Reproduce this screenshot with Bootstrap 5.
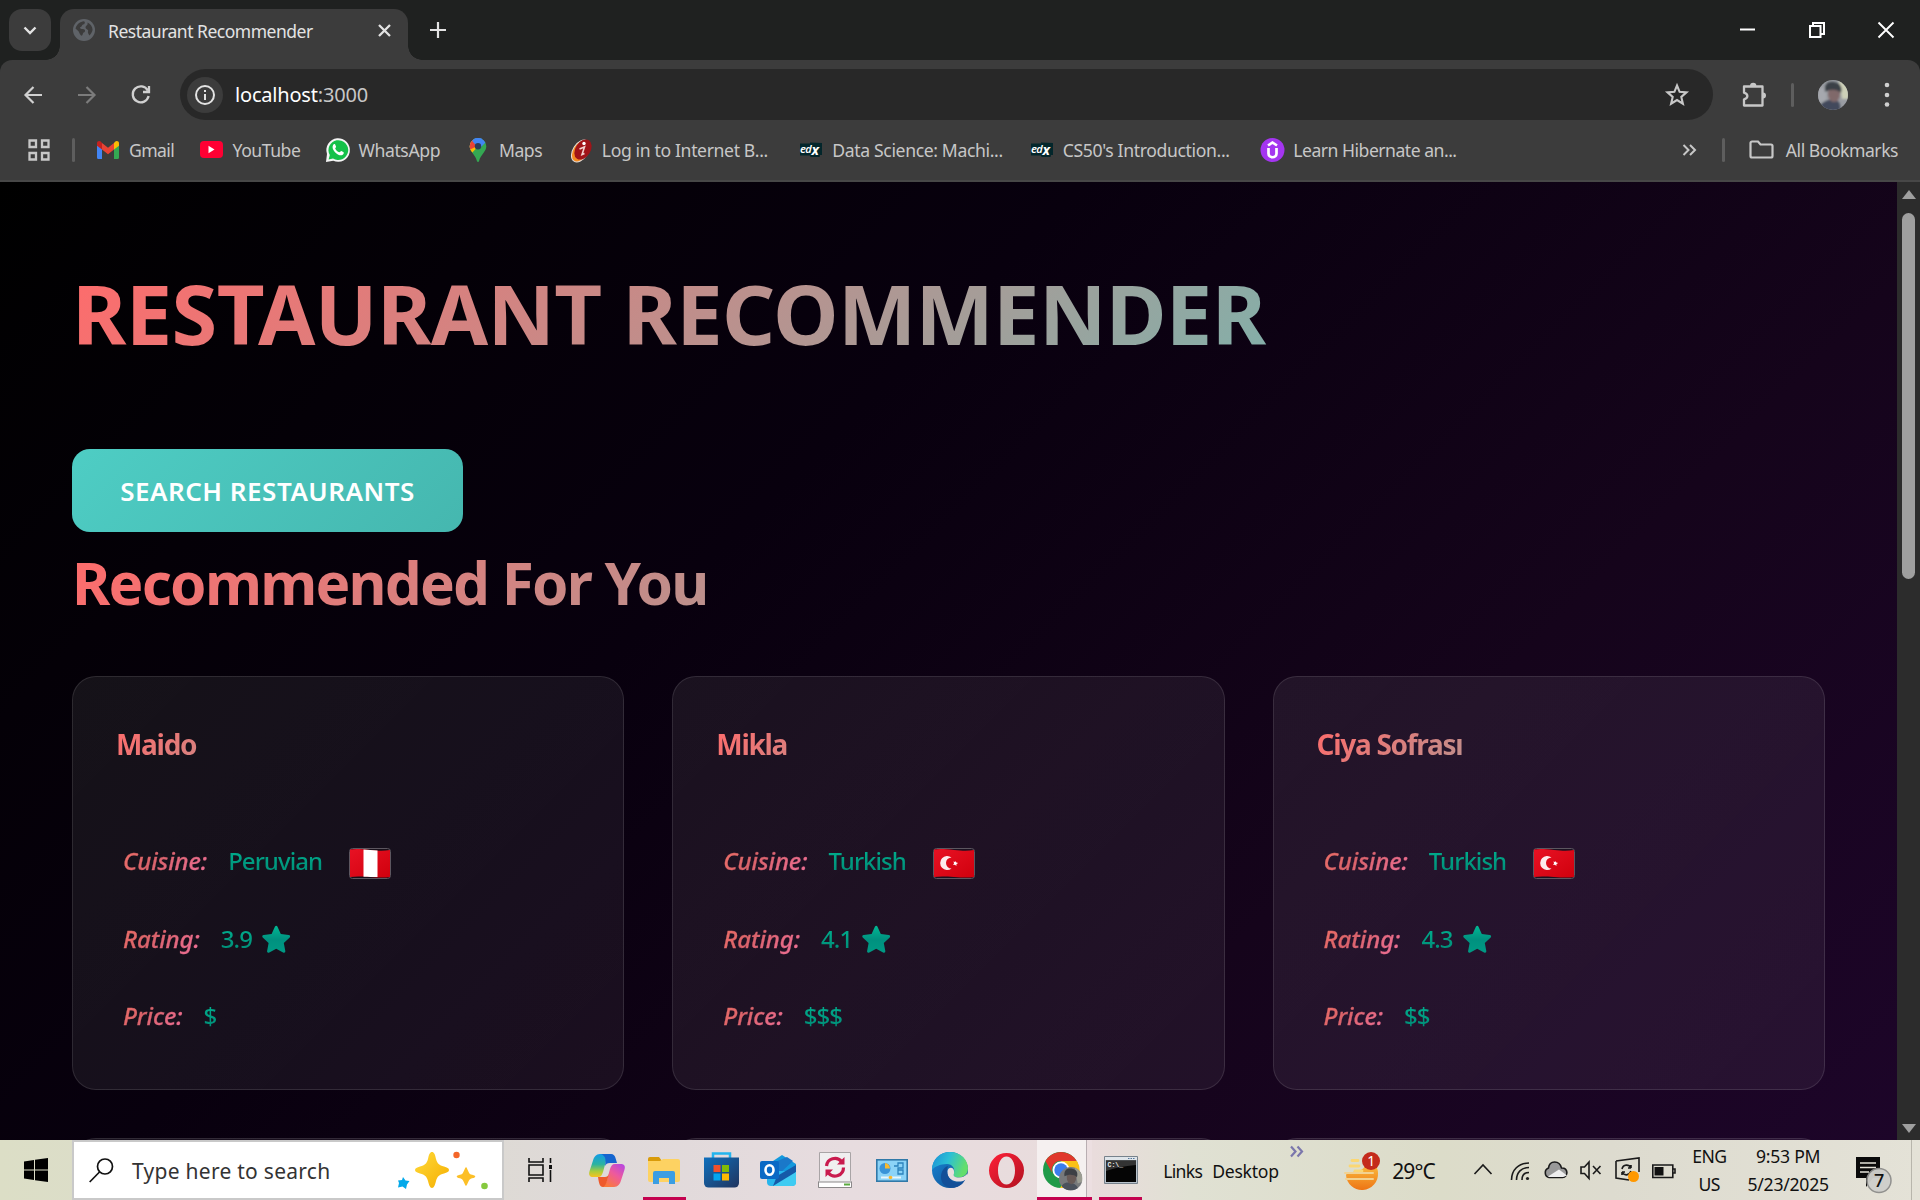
<!DOCTYPE html>
<html lang="en" data-bs-theme="dark">
<head>
<meta charset="utf-8">
<title>Restaurant Recommender</title>
<link rel="stylesheet" href="https://cdn.jsdelivr.net/npm/bootstrap@5.3.0/dist/css/bootstrap.min.css">
<style>
  body { width: 1920px; height: 1200px; overflow: hidden; font-family: "Noto Sans", "Open Sans", sans-serif; background: #1f2120; color: #e3e3e3; white-space: nowrap; }
  svg { display: block; flex: none; overflow: visible; }

  /* tab strip */
  .tabstrip { height: 60px; padding: 9px 0 0 9px; background: #1f2120; }
  .tab-search { width: 42px; height: 42px; border-radius: 13px; background: #3c3c3c; margin-right: 9px; }
  .tab-active { position: relative; width: 348px; height: 51px; border-radius: 14px 14px 0 0; background: #3c3c3c; padding: 0 17px 9px 13px; }
  .tab-active::before, .tab-active::after { content: ""; position: absolute; bottom: 0; width: 14px; height: 14px; }
  .tab-active::before { left: -14px; background: radial-gradient(circle at 0 0, transparent 13.5px, #3c3c3c 14px); }
  .tab-active::after { right: -14px; background: radial-gradient(circle at 100% 0, transparent 13.5px, #3c3c3c 14px); }
  .tab-title { font-size: 17.5px; letter-spacing: -.49px; line-height: 24px; margin-left: 13px; padding-top: 2px; color: #e3e3e3; }
  .new-tab { margin: 13px 0 0 22px; }
  .win-buttons { width: 154px; margin-right: 26px; height: 42px; }

  /* toolbar */
  .toolbar { height: 69px; background: #3c3c3c; border-radius: 12px 12px 0 0; }
  .nav-icons { width: 180px; padding-left: 24px; gap: 36px; }
  .omnibox { width: 1533px; height: 51px; border-radius: 26px; background: #282828; padding: 0 25px 0 7px; }
  .site-info { width: 36px; height: 36px; border-radius: 50%; background: #3c3c3c; }
  .url { font-size: 20px; letter-spacing: -.19px; line-height: 30px; margin-left: 12px; color: #fff; }
  .url span { color: #c7c7c7; }
  .vsep { width: 3px; height: 24px; border-radius: 2px; background: #5e5e5e; }
  .ext-icon { margin-left: 29px; margin-right: 23px; }
  .avatar { margin: 0 36px 0 24px; }

  /* bookmarks */
  .bookmarks { height: 53px; background: #3c3c3c; border-bottom: 2px solid #474747; padding-bottom: 10px; font-size: 17.6px; line-height: 24px; color: #c7c7c7; }
  .apps-icon { margin: 0 22px 0 28px; }
  .bookmarks .vsep { margin-right: 21px; }
  .bookmarks .bm-end { margin-right: 22px; }
  .bm-end .vsep { margin: 0 24px 0 25px; }
  .bm { gap: 9px; letter-spacing: -.45px; }
  .bm-gmail { width: 103.5px; letter-spacing: -.6px; }
  .bm-youtube { width: 126px; }
  .bm-whatsapp { width: 140.5px; letter-spacing: -.4px; }
  .bm-maps { width: 102.8px; letter-spacing: -.5px; }
  .bm-wide { width: 230.5px; letter-spacing: -.36px; }
  .bm-learn { letter-spacing: -.5px; }
  .bm-all { letter-spacing: -.48px; margin-left: 12px; }

  /* viewport */
  .viewport { height: 958px; }
  .page { width: 1897px; height: 958px; overflow: hidden; padding: 81px 72px 0; background: linear-gradient(135deg, #000 0%, #08000e 38%, #15041b 70%, #1d0529 100%); }
  .scrollbar { width: 23px; height: 958px; background: #2c2c2c; padding: 8px 0 7px; }
  .scroll-thumb { width: 13px; height: 366px; border-radius: 7px; background: #9f9f9f; margin-top: 14px; }

  .fade-text { background: linear-gradient(135deg, #ff6b6b, #4ecdc4); -webkit-background-clip: text; background-clip: text; color: transparent; font-weight: 700; }
  h1.fade-text { font-size: 83px; line-height: 100px; letter-spacing: -.67px; margin: 0 0 86px; height: 100px; }
  h2.fade-text { font-size: 58.5px; line-height: 70px; letter-spacing: -1.79px; margin: 15px 0 59px; height: 70px; }
  h3.fade-text { font-size: 28px; line-height: 40px; letter-spacing: -1.3px; margin: 1px 0 58px -1px; height: 40px; }
  .btn-search { width: 391px; height: 83px; border: 0; border-radius: 18px; background: linear-gradient(135deg, #4ecdc4, #45b7af); color: #fff; font-size: 26px; font-weight: 600; letter-spacing: .52px; line-height: 36px; padding: 1px 0 0; }
  .btn-search:hover { color: #fff; }
  .grid { gap: 48px; }
  .place { flex: 0 0 552.3px; height: 414px; border-radius: 24px; border: 1px solid rgba(255,255,255,.11); background: linear-gradient(135deg, rgba(255,255,255,.07), rgba(255,255,255,.055)); padding: 46px 44px 0; }
  .fact { height: 77.5px; padding: 1px 0 0 5px; font-size: 24px; line-height: 36px; font-weight: 500; }
  .fact-name { font-style: italic; background: linear-gradient(135deg, #f07167, #d9626a 40%, #f0709a); -webkit-background-clip: text; background-clip: text; color: transparent; -webkit-text-stroke: .3px transparent; margin-right: 20px; padding: 0 1px; letter-spacing: -.08px; }
  .fact-value { background: linear-gradient(180deg, #00b894, #009079 75%); -webkit-background-clip: text; background-clip: text; color: transparent; letter-spacing: -.95px; }
  .flag { margin: 5px 0 0 27px; }
  .rate-star { margin: 2px 0 0 10px; }
  .next-row { margin-top: 48px; }

  /* taskbar */
  .taskbar { height: 60px; color: #111; background: linear-gradient(90deg, #dcdec6 0, #dcdbd0 20%, #dfd9d9 31%, #e7dcdf 44%, #e9dcdc 57%, #e0e1d3 62%, #dcdcc9 75%, #dddbcf 84%, #e4e2d7 100%); }
  .taskbar > * { flex: none; }
  .start { width: 72px; }
  .search-box { width: 432px; height: 60px; background: #fff; border: 2px solid #c9c9c9; padding: 0 13px 0 15px; }
  .search-label { font-size: 21px; letter-spacing: .27px; color: #333; margin-left: 18px; padding-top: 4px; }
  .task-view { width: 74.5px; padding-right: 2px; }
  .slot { width: 57.1px; height: 60px; }
  .running { box-shadow: inset 0 -3px #c4024f; width: 43px; margin: 0 7px; }
  .chrome-slot { width: 55px; background: linear-gradient(90deg, #f5f0f0 49px, #b9aeb2 49px, #b9aeb2 50px, #ecdfe1 50px); box-shadow: inset 0 -3px #c4024f; margin-left: 2px; }
  .chrome-slot svg { margin: 2px 0 0 6px; }
  .terminal-slot { margin: 0 0 0 7px; }
  .bands { width: 185px; padding: 2px 0 0 21px; font-size: 17.6px; line-height: 24px; }
  .bands svg { margin-top: -13px; }
  .b-links { width: 49px; letter-spacing: -.7px; }
  .b-desk { width: 78px; letter-spacing: -.25px; }
  .weather { margin-left: 17px; }
  .temp { font-size: 21px; letter-spacing: -.9px; width: 93px; padding-left: 11px; padding-top: 3px; }
  .lang, .clock { font-size: 17.6px; line-height: 28px; text-align: center; }
  .lang { width: 34px; letter-spacing: -.5px; margin-left: 16px; }
  .clock { width: 86px; letter-spacing: -.25px; margin-left: 19px; margin-right: 25px; }
  .notify { margin-top: 5px; }
  .desk-edge { width: 1px; height: 60px; background: #b8b6ac; margin-left: 19px; }
</style>
</head>
<body>

<header>
  <div class="tabstrip d-flex">
    <div class="tab-search d-flex align-items-center justify-content-center">
      <svg width="14" height="9" fill="none" stroke="#e3e3e3" stroke-width="2.4"><path d="M1.500 1.500 7 7l5.500-5.500"/></svg>
    </div>
    <div class="tab-active d-flex align-items-center">
      <svg width="22" height="22" viewBox="0 0 22 22"><circle cx="11" cy="11" r="11" fill="#5f6368"/><path d="M2.500 9.500C4 5 7 2.700 11 2.300c1.500 1 1 2.700-.8 3.200-1.700.4-1 2.500-3 2.700-.8.900.6 1.800 2.800 1.800 2.500 0 2.700 3 .7 3.600-1.200.4-.6 3-2.300 3.200C6 15 6.500 12.500 4.700 11.500zM14.500 3.500c3 1.200 5 4 5.100 7.500-.6 2.300-1.600 4-3.200 5.600-.6-2-2-2.600-1.300-4.700.6-1.600-2.600-1.200-2.600-3.600 0-2 2.800-1.600 2-4.800z" fill="#3c3c3c"/></svg>
      <span class="tab-title">Restaurant Recommender</span>
      <svg class="ms-auto" width="13" height="13" stroke="#e3e3e3" stroke-width="2.300"><path d="M1 1l11 11M12 1 1 12"/></svg>
    </div>
    <svg class="new-tab" width="16" height="16" stroke="#e3e3e3" stroke-width="2.200"><path d="M8 0v16M0 8h16"/></svg>
    <div class="win-buttons ms-auto d-flex align-items-center justify-content-between">
      <svg width="16" height="16"><path d="M0 7.500h15" stroke="#fff" stroke-width="2"/></svg>
      <svg width="16" height="16" fill="none" stroke="#fff" stroke-width="2"><path d="M1 4h10.500v11H1zM4 4V1h11v11h-3.500"/></svg>
      <svg width="16" height="16" stroke="#fff" stroke-width="1.900"><path d="M.5.5l15 15M15.500.5l-15 15"/></svg>
    </div>
  </div>

  <div class="toolbar d-flex align-items-center">
    <div class="nav-icons d-flex align-items-center">
      <svg width="18" height="18" fill="none" stroke="#d0d0d0" stroke-width="2.200"><path d="M18 9H2M9.500 1 1.500 9l8 8"/></svg>
      <svg width="18" height="18" fill="none" stroke="#7c7c7c" stroke-width="2.200"><path d="M0 9h16M8.500 1l8 8-8 8"/></svg>
      <svg width="19" height="19" fill="none" stroke="#d0d0d0" stroke-width="2.300"><path d="M15.800 5.500A8 8 0 1 0 16.600 11M17 1v6h-6"/></svg>
    </div>
    <div class="omnibox d-flex align-items-center">
      <div class="site-info d-flex align-items-center justify-content-center">
        <svg width="20" height="20" fill="none" stroke="#e3e3e3" stroke-width="2"><circle cx="10" cy="10" r="9"/><path d="M10 9v6M10 5v2"/></svg>
      </div>
      <span class="url">localhost<span>:3000</span></span>
      <svg class="ms-auto" width="22" height="22" fill="none" stroke="#c7c7c7" stroke-width="2.100"><path d="M11 1.500l2.600 6.300 6.900.6-5.200 4.500 1.600 6.800L11 16.100l-5.900 3.600 1.600-6.800L1.500 8.400l6.900-.6z"/></svg>
    </div>
    <svg class="ext-icon" width="26" height="26" fill="none" stroke="#c7c7c7" stroke-width="2.300"><path d="M2 4.500h18.500v19H2v-6.200c4.500-1 4.500-5.400 0-6.600z" stroke-linejoin="round"/><path d="M8 4a3.200 3.200 0 0 1 6.400 0zM21 10.500a3 3 0 0 1 0 6z" fill="#c7c7c7" stroke="none"/></svg>
    <span class="vsep"></span>
    <svg class="avatar" width="30" height="30" viewBox="0 0 30 30"><defs><clipPath id="av"><circle cx="15" cy="15" r="15"/></clipPath><filter id="sf"><feGaussianBlur stdDeviation=".8"/></filter></defs><g clip-path="url(#av)"><path d="M0 0h30v30H0z" fill="#9a9da3"/><g filter="url(#sf)"><path d="M21 0h10v19l-7 0z" fill="#cdd0b8"/><path d="M0 8h8v14H0z" fill="#a6a8ae"/><path d="M2 31c0-9 5-11 12-11s9 3 8 11z" fill="#424a5b"/><ellipse cx="16" cy="14" rx="6" ry="8" fill="#80696a"/><path d="M7 12C6 4 10 1 16 2s9 5 7 11c-4-4-11-4-16-1z" fill="#3a4046"/></g></g></svg>
    <svg width="6" height="30" fill="#d0d0d0"><circle cx="3" cy="5" r="2.300"/><circle cx="3" cy="15" r="2.300"/><circle cx="3" cy="24.500" r="2.300"/></svg>
  </div>

  <div class="bookmarks d-flex align-items-center">
    <svg class="apps-icon" width="22" height="22" fill="none" stroke="#c7c7c7" stroke-width="2.300"><path d="M1.500 1.500h6.500v6.500H1.500zM14 1.500h6.500v6.500H14zM1.500 14h6.500v6.500H1.500zM14 14h6.500v6.500H14z"/></svg>
    <span class="vsep"></span>
    <div class="bm bm-gmail d-flex align-items-center">
      <svg width="24" height="18" viewBox="0 0 24 18"><path d="M1 3v13.500c0 .8.500 1.500 1.300 1.500H6V8z" fill="#4285f4"/><path d="M23 3v13.500c0 .8-.5 1.500-1.300 1.500H18V8z" fill="#34a853"/><path d="M6 2v6.500l6 4.700 6-4.700V2l-6 4.700z" fill="#ea4335"/><path d="M1 2.500C1 0 3.500-.5 5 .8L6 1.900v6.600L1 4.800z" fill="#c5221f"/><path d="M23 2.500C23 0 20.500-.5 19 .8l-1 1.100v6.600l5-3.700z" fill="#fbbc04"/></svg><span>Gmail</span>
    </div>
    <div class="bm bm-youtube d-flex align-items-center">
      <svg width="24" height="17"><rect width="23" height="17" rx="4" fill="#ff0033"/><path d="M8.500 4.800v7.400l6-3.700z" fill="#fff"/></svg><span>YouTube</span>
    </div>
    <div class="bm bm-whatsapp d-flex align-items-center">
      <svg width="24" height="24" viewBox="0 0 24 24"><path d="M0 24l1-8A11.800 11.800 0 1 1 7.300 22.800z" fill="#f5f5f5"/><path d="M2.600 21.500l1.200-4.400A9.900 9.900 0 1 1 7 20.400z" fill="#15c149"/><path d="M7.200 6.800c1-1.300 2-.7 2.300.4l.6 1.500c.2.700-1.300 1.300-.8 2 1 1.800 2.200 2.800 4 3.600.8.300 1.300-1.500 2-1.200l2 1c1 .5.400 2.300-.9 2.900-2 .9-4.500-.2-6.500-2-2.200-2-4.400-5-2.700-8.200z" fill="#fff"/></svg><span>WhatsApp</span>
    </div>
    <div class="bm bm-maps d-flex align-items-center">
      <svg width="24" height="24" viewBox="0 0 24 24"><defs><clipPath id="pin"><path d="M12 0a8.300 8.300 0 0 1 8.300 8.300c0 5.500-5.600 8-7.300 15-.3 1-1.700 1-2 0-1.700-7-7.300-9.500-7.300-15A8.300 8.300 0 0 1 12 0z"/></clipPath></defs><g clip-path="url(#pin)"><path d="M0 0h24v24H0z" fill="#34a853"/><path d="M0 17L16 1H24V0H8L0 10z" fill="#4285f4"/><path d="M0 0h6.500L12 8.500 4 17H0z" fill="#fbbc04"/><path d="M0 0h6l5.500 8L3 12z" fill="#ea4335"/><path d="M6 2.800L9 0h9l2 4-7 7z" fill="#4285f4"/></g><circle cx="12" cy="8.300" r="3.200" fill="#2c3c57"/></svg><span>Maps</span>
    </div>
    <div class="bm bm-wide d-flex align-items-center">
      <svg width="24" height="24" viewBox="0 0 24 24"><ellipse cx="11.500" cy="13" rx="7.500" ry="12" transform="rotate(33 11.500 13)" fill="#f58a1f" stroke="#e8ded8" stroke-width="1"/><ellipse cx="14" cy="11.500" rx="7.500" ry="11" transform="rotate(33 14 11.500)" fill="#a01418"/><circle cx="15" cy="5.500" r="1.700" fill="#fff"/><path d="M10.500 11l5-2-2.500 7.500 2.500-1" fill="none" stroke="#f3d3cf" stroke-width="1.600"/></svg><span>Log in to Internet B...</span>
    </div>
    <div class="bm bm-wide d-flex align-items-center">
      <svg width="24" height="16" viewBox="0 0 24 16"><path d="M1 1.500h10V.5L23 1v12h-2l-.5 2H11.500l-.5-1.500h-10z" fill="#03262b"/><text x="1" y="10.500" font-size="11" font-weight="600" font-style="italic" fill="#fff" letter-spacing="-.6">ed</text><text x="12.500" y="13" font-size="14" font-weight="700" font-style="italic" fill="#fff">x</text></svg><span>Data Science: Machi...</span>
    </div>
    <div class="bm bm-wide d-flex align-items-center">
      <svg width="24" height="16" viewBox="0 0 24 16"><path d="M1 1.500h10V.5L23 1v12h-2l-.5 2H11.500l-.5-1.500h-10z" fill="#03262b"/><text x="1" y="10.500" font-size="11" font-weight="600" font-style="italic" fill="#fff" letter-spacing="-.6">ed</text><text x="12.500" y="13" font-size="14" font-weight="700" font-style="italic" fill="#fff">x</text></svg><span>CS50's Introduction...</span>
    </div>
    <div class="bm bm-wide bm-learn d-flex align-items-center">
      <svg width="24" height="24"><circle cx="12.500" cy="12" r="12" fill="#a435f0"/><path d="M8.500 10v5.500c0 5 8 5 8 0V10M8 7.500l4.500-3 4.500 3" fill="none" stroke="#fff" stroke-width="2.700"/></svg><span>Learn Hibernate an...</span>
    </div>
    <div class="bm-end ms-auto d-flex align-items-center">
      <svg width="15" height="12" fill="none" stroke="#c7c7c7" stroke-width="2"><path d="M1.500 1l5 5-5 5M8 1l5 5-5 5"/></svg>
      <span class="vsep"></span>
      <svg width="25" height="19" fill="none" stroke="#c7c7c7" stroke-width="2.200"><path d="M3 1.500h6l2.500 3H22a1.500 1.500 0 0 1 1.500 1.500v10a1.500 1.500 0 0 1-1.500 1.500H3A1.500 1.500 0 0 1 1.500 16V3A1.500 1.500 0 0 1 3 1.500z"/></svg>
      <span class="bm-all">All Bookmarks</span>
    </div>
  </div>
</header>

<div class="viewport d-flex">
  <main class="page">
    <h1 class="fade-text">RESTAURANT RECOMMENDER</h1>
    <button class="btn btn-search d-block">SEARCH RESTAURANTS</button>
    <h2 class="fade-text">Recommended For You</h2>
    <div class="grid d-flex">
      <article class="place">
        <h3 class="fade-text">Maido</h3>
        <div class="fact d-flex align-items-center"><span class="fact-name">Cuisine:</span><span class="fact-value">Peruvian</span>
          <svg class="flag" width="42" height="31" viewBox="0 0 42 31"><use href="#peru"/></svg></div>
        <div class="fact d-flex align-items-center"><span class="fact-name">Rating:</span><span class="fact-value">3.9</span><svg width="28" height="27" class="rate-star"><use href="#star"/></svg></div>
        <div class="fact d-flex align-items-center"><span class="fact-name">Price:</span><span class="fact-value">$</span></div>
      </article>
      <article class="place">
        <h3 class="fade-text">Mikla</h3>
        <div class="fact d-flex align-items-center"><span class="fact-name">Cuisine:</span><span class="fact-value">Turkish</span>
          <svg class="flag" width="42" height="31" viewBox="0 0 42 31"><use href="#turkey"/></svg></div>
        <div class="fact d-flex align-items-center"><span class="fact-name">Rating:</span><span class="fact-value">4.1</span><svg width="28" height="27" class="rate-star"><use href="#star"/></svg></div>
        <div class="fact d-flex align-items-center"><span class="fact-name">Price:</span><span class="fact-value">$$$</span></div>
      </article>
      <article class="place">
        <h3 class="fade-text">Ciya Sofrası</h3>
        <div class="fact d-flex align-items-center"><span class="fact-name">Cuisine:</span><span class="fact-value">Turkish</span>
          <svg class="flag" width="42" height="31" viewBox="0 0 42 31"><use href="#turkey"/></svg></div>
        <div class="fact d-flex align-items-center"><span class="fact-name">Rating:</span><span class="fact-value">4.3</span><svg width="28" height="27" class="rate-star"><use href="#star"/></svg></div>
        <div class="fact d-flex align-items-center"><span class="fact-name">Price:</span><span class="fact-value">$$</span></div>
      </article>
    </div>
    <div class="grid next-row d-flex"><article class="place"></article><article class="place"></article><article class="place"></article></div>
  </main>
  <div class="scrollbar d-flex flex-column align-items-center">
    <svg width="14" height="9"><path d="M0 9 7 0l7 9z" fill="#9f9f9f"/></svg>
    <div class="scroll-thumb"></div>
    <svg class="mt-auto" width="14" height="9"><path d="M0 0 7 9l7-9z" fill="#9f9f9f"/></svg>
  </div>
</div>

<footer class="taskbar d-flex align-items-center">
  <div class="start d-flex justify-content-center"><svg width="24" height="24" viewBox="0 0 24 24"><path d="M0 3.500 10 2v9.400H0zM11 1.800 24 0v11.400H11zM0 12.500h10V22L0 20.500zM11 12.500h13V24l-13-1.800z"/></svg></div>
  <div class="search-box d-flex align-items-center">
    <svg width="25" height="25" fill="none" stroke="#111" stroke-width="1.700"><circle cx="16" cy="8.500" r="7.500"/><path d="M10.500 14 .7 24"/></svg>
    <span class="search-label">Type here to search</span>
    <svg class="ms-auto" width="92" height="36" viewBox="0 0 92 36"><defs><linearGradient id="gold" x1="0" y1="0" x2="1" y2="1"><stop offset="0" stop-color="#ffda3a"/><stop offset="1" stop-color="#f5ae00"/></linearGradient></defs><path d="M35 0c2 0 3 2 4 7 1.500 5 3 6 8 7.500 3 1 5 1.700 5 3.500s-2 2.500-5 3.500c-5 1.500-6.500 2.500-8 7.500-1 4-2 7-4 7s-3-3-4-7c-1.500-5-3-6-8-7.500-3-1-5-1.700-5-3.500s2-2.500 5-3.500c5-1.500 6.500-2.500 8-7.500 1-5 2-7 4-7z" fill="url(#gold)"/><path d="M69 16c1.500 3 2 5.500 3.500 6.500s3 1 5 2c-2 1.300-3.800 1-5 2.200-1.500 1-2 3.300-3.500 6.300-1.500-3-2-5.300-3.500-6.300-1.200-1.200-3-.9-5-2.200 2-1 3.500-1 5-2S67.500 19 69 16z" fill="#fcbf27" stroke="#fcbf27" stroke-width="1.500" stroke-linejoin="round"/><path d="M6 25l2.500 3.500 4 .5-2.500 3.500-1 4.500-3.500-2.500L1 35.500 2 31l-1-2.500 4-.5z" fill="#04a9ea"/><circle cx="59.500" cy="3" r="3.200" fill="#f4662a"/><circle cx="87.500" cy="34" r="3.300" fill="#86c93e"/></svg>
  </div>
  <div class="task-view d-flex justify-content-center"><svg width="24" height="24" fill="none" stroke="#111" stroke-width="1.600"><path d="M1 0v4h14V0M1 24v-4h14v4M1 7h14v10H1zM22.500 0v5M22.500 12v12"/><path d="M21 7h3v4h-3z" fill="#111" stroke="none"/></svg></div>

  <!-- Copilot -->
  <div class="slot d-flex align-items-center justify-content-center"><svg width="36" height="33" viewBox="0 0 36 33"><defs><linearGradient id="cp1" x1="0" y1="0" x2="0" y2="1"><stop offset="0" stop-color="#129be8"/><stop offset=".45" stop-color="#2bb3a0"/><stop offset=".75" stop-color="#a8cc3c"/><stop offset="1" stop-color="#f7c320"/></linearGradient><linearGradient id="cp2" x1="1" y1="0" x2=".3" y2="1"><stop offset="0" stop-color="#b144e8"/><stop offset=".5" stop-color="#ee5a9c"/><stop offset="1" stop-color="#fa7a3b"/></linearGradient></defs><path d="M22 0H11C7 0 5 3 4 6.500L.6 17C-.8 21 1 23 4 23h5c3 0 4-2 5-5l3-11c1-3 2-5 5-5z" fill="url(#cp1)"/><path d="M12 0h10c2.500 0 4 2 4.500 4L28 9h-7c-3 0-4 1-5 3 1-6 1-10-4-12z" fill="#1565cf"/><path d="M14 33h11c4 0 6-3 7-6.500L35.400 16C36.800 12 35 10 32 10h-6c-3 0-4 2-5 5l-3 11c-1 3-2 5-5 5z" fill="url(#cp2)"/><path d="M9 23h7c2 0 3-1 4-3-2 7-3 12-6 13-3 0-4-3-5-10z" fill="#ee5a2c"/></svg></div>
  <!-- File Explorer -->
  <div class="slot running d-flex align-items-center justify-content-center"><svg width="32" height="27" viewBox="0 0 32 27"><path d="M0 2a2 2 0 0 1 2-2h9l3 4H0z" fill="#d99b0a"/><path d="M0 4h12l3-2h15a2 2 0 0 1 2 2v19a2 2 0 0 1-2 2H2a2 2 0 0 1-2-2z" fill="#fdd262"/><path d="M5 16a2 2 0 0 1 2-2h18a2 2 0 0 1 2 2v11h-6v-6H11v6H5z" fill="#3c9ee2"/></svg></div>
  <!-- Store -->
  <div class="slot d-flex align-items-center justify-content-center"><svg width="35" height="36" viewBox="0 0 35 36"><defs><linearGradient id="st" x1="0" y1="0" x2="1" y2="1"><stop offset="0" stop-color="#0f70bd"/><stop offset="1" stop-color="#20345e"/></linearGradient></defs><path d="M9 6V1.500h17V6" fill="none" stroke="#22b5ee" stroke-width="2.500"/><path d="M0 5.500h35V31a4.500 4.500 0 0 1-4.500 4.500h-26A4.500 4.500 0 0 1 0 31z" fill="url(#st)"/><path d="M9.500 13h7v7h-7z" fill="#f2502b"/><path d="M18 13h7v7h-7z" fill="#80bb06"/><path d="M9.500 21.500h7v7h-7z" fill="#04a5ee"/><path d="M18 21.500h7v7h-7z" fill="#fdb902"/></svg></div>
  <!-- Outlook -->
  <div class="slot d-flex align-items-center justify-content-center"><svg width="37" height="32" viewBox="0 0 37 32"><path d="M7 11 22 1l14 9v8H7z" fill="#1399dd"/><path d="M15 8 27 3l6 4-14 13z" fill="#1a78c9"/><path d="M7 17h29v11a4 4 0 0 1-4 4H11a4 4 0 0 1-4-4z" fill="#27b5ec"/><path d="M36 11v7L20 32h-7l4-10z" fill="#155aa8"/><path d="M36 18v10c0 3-2 4-4 4H13z" fill="#3ecbf2"/><rect y="7" width="19" height="18" rx="2" fill="#0a69c5"/><ellipse cx="9.500" cy="16" rx="4" ry="4.700" fill="none" stroke="#fff" stroke-width="2.600"/></svg></div>
  <!-- Sync drive -->
  <div class="slot d-flex align-items-center justify-content-center"><svg width="34" height="36" viewBox="0 0 34 36"><path d="M1.500.5h31v28l1 1v6H.5v-6l1-1z" fill="#f0eff0" stroke="#a9a4a6"/><path d="M.5 30h33v5.500H.5z" fill="#fff" stroke="#8b8889"/><path d="M26 31.500h6v2h-6z" fill="#5baa3f"/><path d="M8.500 14a8.500 8.500 0 0 1 15-4.500M25.500 15.500A8.500 8.500 0 0 1 10.500 21" fill="none" stroke="#c91b4e" stroke-width="3.200"/><path d="M26.500 5v7.500H19zM7.500 25V17.500h7.500z" fill="#c91b4e"/></svg></div>
  <!-- Control Panel -->
  <div class="slot d-flex align-items-center justify-content-center"><svg width="32" height="23" viewBox="0 0 32 23"><rect x=".8" y=".8" width="30.400" height="21.400" fill="#8bd3f7" stroke="#3179a8" stroke-width="1.600"/><circle cx="9" cy="9.500" r="5.500" fill="#3a94d8"/><path d="M9 9.500V4a5.500 5.500 0 0 1 5 5.500z" fill="#f8b92f"/><path d="M18 7h4V4h5v5h-5v6h5v-4h-5" fill="none" stroke="#2b83bd" stroke-width="1.300"/><path d="M5 18.500h20" stroke="#e7f6fd" stroke-width="2"/><circle cx="14.500" cy="18.500" r="1.800" fill="#f8b92f"/></svg></div>
  <!-- Edge -->
  <div class="slot d-flex align-items-center justify-content-center"><svg width="36" height="36" viewBox="0 0 36 36"><defs><linearGradient id="e1" x1="0" y1="0" x2="1" y2=".3"><stop offset="0" stop-color="#1b8ed6"/><stop offset=".5" stop-color="#2bbfd5"/><stop offset="1" stop-color="#63de6c"/></linearGradient><linearGradient id="e2" x1="0" y1="0" x2="1" y2="1"><stop offset="0" stop-color="#1787d8"/><stop offset="1" stop-color="#114a8b"/></linearGradient></defs><circle cx="18" cy="18" r="18" fill="url(#e2)"/><path d="M0 18C0 7 8 0 18 0c11 0 18 8 18 16 0 6-4 9.500-9 9.500-4.500 0-7-1.500-5.500-4C24 17 20 12 15 12 8 12 2 15 0 18z" fill="url(#e1)"/><path d="M22 21.500c-1.500 2.500 1 4 5 4 3 0 5.500-1 8.500-4L36.500 27l-3.500 1c-5 3.500-19 1.500-17.500-9 1-5 7-3.500 6.500.5z" fill="#e9dddf"/><path d="M33 28C28 38 14 38 10 30 7 23 11 15 16 14c-3 6 1 16 9 17 3 0 6-1 8-3z" fill="#134f98"/></svg></div>
  <!-- Opera -->
  <div class="slot d-flex align-items-center justify-content-center"><svg width="35" height="35" viewBox="0 0 35 35"><defs><linearGradient id="op" x1="0" y1="0" x2="1" y2="1"><stop offset="0" stop-color="#ff2038"/><stop offset="1" stop-color="#b01220"/></linearGradient></defs><path fill-rule="evenodd" d="M17.500 0a17.500 17.500 0 1 0 0 35 17.500 17.500 0 0 0 0-35zm0 3.500c5 0 8.500 6 8.500 14s-3.500 14-8.500 14-8.500-6-8.500-14 3.500-14 8.500-14z" fill="url(#op)"/></svg></div>
  <!-- Chrome -->
  <div class="slot chrome-slot d-flex align-items-center"><svg width="39" height="39" viewBox="0 0 39 39"><circle cx="18" cy="18" r="18" fill="#1f9a48"/><path d="M18 9h16A18 18 0 0 1 17 36l9-14z" fill="#fbc116"/><path d="M2.500 9A18 18 0 0 1 33.600 9H18a9 9 0 0 0-8 13.500z" fill="#e0382c"/><circle cx="18" cy="18" r="8.500" fill="#fff"/><circle cx="18" cy="18" r="6.700" fill="#3b7ded"/><g transform="translate(16 15) scale(.78)"><g clip-path="url(#av)"><path d="M0 0h30v30H0z" fill="#77797b"/><g filter="url(#sf)"><path d="M20 0h10v19l-6 2z" fill="#9b9c92"/><path d="M2 30c1-9 6-11 12-10s10 4 11 10z" fill="#4b515c"/><ellipse cx="16" cy="14" rx="6" ry="8" fill="#675a57"/><path d="M7 12C6 4 10 1 16 2s9 5 7 11c-4-4-11-4-16-1z" fill="#3d4145"/></g></g></g></svg></div>
  <!-- Terminal -->
  <div class="slot running terminal-slot d-flex align-items-center justify-content-center"><svg width="34" height="28" viewBox="0 0 34 28"><path d="M.5.5h33v27H.5z" fill="#b9c3cc" stroke="#77828c"/><path d="M1 1h32v3H1z" fill="#dfe5ea"/><path d="M24 2.500h7" stroke="#52749a" stroke-dasharray="1.500 1"/><path d="M2 4.500h30V26H2z" fill="#050505"/><path d="M2 4.500h30V9C20 10 10 12 2 15z" fill="#333"/><text x="3.500" y="11" font-family="Liberation Mono" font-size="6.500" font-weight="700" fill="#eee">C:\_</text></svg></div>
  <div class="bands d-flex">
    <span class="b-links">Links</span><span class="b-desk">Desktop</span>
    <svg width="14" height="11" fill="none" stroke="#7b77ac" stroke-width="2.200"><path d="M1 .5l4.500 5L1 10.500M7.500.5l4.500 5-4.500 5"/></svg>
  </div>
  <div class="weather d-flex align-items-center">
    <svg width="37" height="36" viewBox="0 0 37 36"><defs><linearGradient id="sun" x1="0" y1="0" x2="0" y2="1"><stop offset="0" stop-color="#fbc344"/><stop offset="1" stop-color="#ee7414"/></linearGradient></defs><path d="M2 23c1-3 9-3 14-4.500 3-1 5-4.500 9-8 6 2 9 5 9 10.500a16 16 0 0 1-32 2z" fill="url(#sun)"/><path d="M8 8.500h6M6 14h9M11 19h7" stroke="#fbd773" stroke-width="2.800" stroke-linecap="round"/><path d="M1 21h28M2 27h27" stroke="#f2d291" stroke-width="2" stroke-linecap="round"/><circle cx="27" cy="9" r="9" fill="#c42b1c"/><text x="23.200" y="14" font-size="14" fill="#fff">1</text></svg>
    <span class="temp">29°C</span>
  </div>
  <svg width="202" height="28" viewBox="1475 1156 202 28" fill="none" stroke="#1a1a1a" stroke-width="1.600">
    <path d="M1475.500 1174l8.500-9 8.500 9"/>
    <path d="M1512.500 1180c0-10 7-17 17.500-17M1517.500 1180c0-7.500 5-12.500 12.500-12.500M1523 1180c0-4.500 2.500-7.500 7-7.500"/><circle cx="1528.500" cy="1178.500" r="1.600" fill="#1a1a1a" stroke="none"/>
    <path d="M1550 1177.500a5 5 0 0 1-.5-9.500c1-8 11-8 13 0 7-.5 7 9 1 9.500z" fill="#999"/><path d="M1549 1176.500l11-7 8 6-4 1.500h-14z" fill="#eee" stroke="none"/>
    <path d="M1582 1167h3.500l4.500-5v16.500l-4.500-5h-3.500zM1594 1166l7.500 8M1601.500 1166l-7.500 8"/>
    <path d="M1617 1161l23-3v14M1617 1161v17l13 2"/><path d="M1623 1169c1-5 7-5 9-1v-3m0 3h-3M1632 1171c-2 5-7 5-9 1v3m0-3h3"/><circle cx="1634.500" cy="1176.500" r="5.500" fill="#ff9800" stroke="none"/>
    <path d="M1653.800 1165h20v12.500h-20zM1674.500 1169h1.500v4h-1.500"/><path d="M1655.500 1167h9v8.500h-9z" fill="#111" stroke="none"/>
  </svg>
  <div class="lang">ENG<br>US</div>
  <div class="clock">9:53 PM<br>5/23/2025</div>
  <svg class="notify" width="36" height="38" viewBox="0 0 36 38"><path d="M0 3h24v21h-7l-7 9v-9H0z" fill="#0a0a0a"/><path d="M4 9h16M4 13.500h16M4 18h9" stroke="#e4e2d7" stroke-width="1.500"/><circle cx="23" cy="26.500" r="12" fill="#cfcfcb" stroke="#8e8e8c" stroke-width="1.500" opacity=".96"/><text x="18" y="33" font-size="18" font-weight="500" fill="#111">7</text></svg>
  <div class="desk-edge"></div>
</footer>

<svg width="0" height="0" class="position-absolute">
  <defs>
    <linearGradient id="teal" x1="0" y1="0" x2="0" y2="1"><stop offset="0" stop-color="#00b894"/><stop offset=".5" stop-color="#00917f"/><stop offset="1" stop-color="#009a84"/></linearGradient>
    <linearGradient id="red" x1="0" y1="0" x2="1" y2="1"><stop offset="0" stop-color="#e81224"/><stop offset="1" stop-color="#d0000d"/></linearGradient>
    <path id="star" d="M13 .5c.8-1 1.700-1 2.400 0l3.400 7.600 7.900.9c1.500.2 1.800 1.500 1 2.500l-5.900 5.600 1.500 8c.2 1.500-1 2-2.200 1.400L14.200 22.800l-6.900 3.700c-1.200.6-2.400.1-2.200-1.400l1.500-8L.7 11.500c-.8-1-.5-2.300 1-2.500l7.900-.9z" fill="url(#teal)"/>
    <g id="peru"><rect x=".5" y=".5" width="41" height="30" rx="3" fill="#17101a" stroke="#5c565f"/><path d="M1 1.500c6-1 11-.5 20 .5s14 1 20 0v27c-6 1-12 .5-20 0s-13-1-20 0z" fill="url(#red)"/><path d="M14.500 1.400c4 .1 9 .6 14 1v26.700c-5 0-9-.4-14-.4z" fill="#fff"/></g>
    <g id="turkey"><rect x=".5" y=".5" width="41" height="30" rx="3" fill="#1b1221" stroke="#5c565f"/><path d="M1 1.500c6-1 11-.5 20 .5s14 1 20 0v27c-6 1-12 .5-20 0s-13-1-20 0z" fill="url(#red)"/><path d="M18.500 9.500a7 7 0 1 0 0 11 5.500 5.500 0 1 1 0-11z" fill="#fff" opacity=".92"/><path d="M22.500 13l.8 1.600 1.900.5-1.700 1-.2 1.900-1.300-1.300-1.900.2 1-1.700-.7-1.700 1.700.5z" fill="#fff"/></g>
  </defs>
</svg>
<script src="https://cdn.jsdelivr.net/npm/bootstrap@5.3.0/dist/js/bootstrap.bundle.min.js"></script>
</body>
</html>
